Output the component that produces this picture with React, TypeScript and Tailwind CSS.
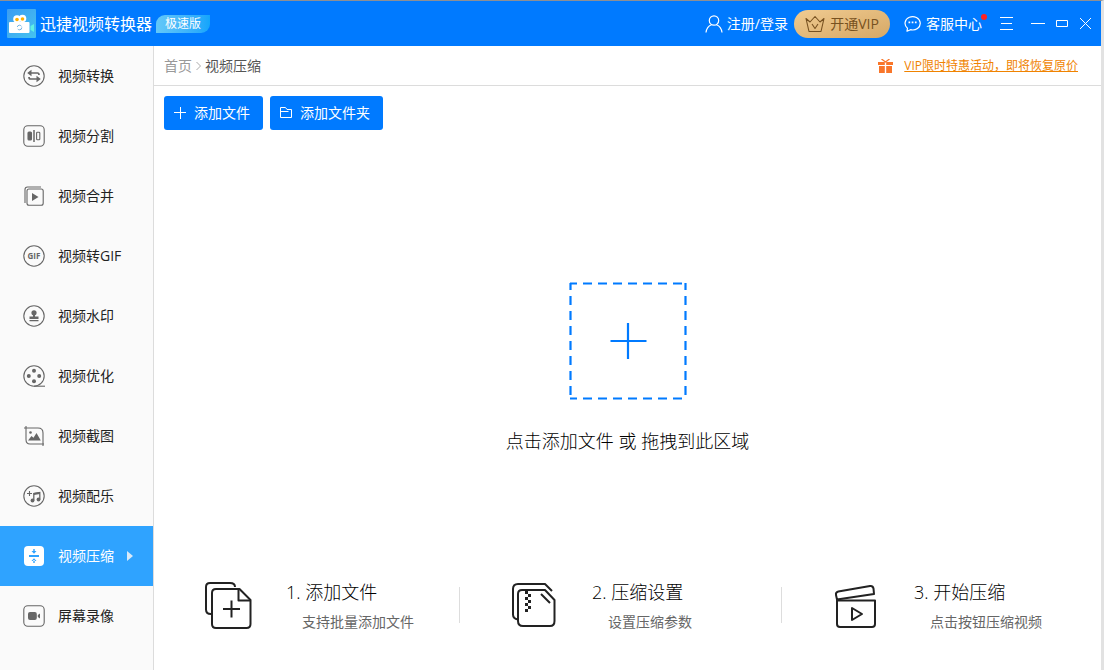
import type { ReactNode } from 'react'

function Icon({ children }: { children: ReactNode }) {
  return (
    <svg
      className="size-[22px] shrink-0"
      viewBox="0 0 22 22"
      fill="none"
      stroke="currentColor"
      strokeWidth="1.1"
      aria-hidden="true"
    >
      {children}
    </svg>
  )
}

const NAV_ITEMS: { label: string; icon: ReactNode; active?: boolean }[] = [
  {
    label: '视频转换',
    icon: (
      <Icon>
        <circle cx="11" cy="11" r="10.2" />
        <path d="M6 8h8.500c1.200 0 1.500.6 1.500 2M16 14H7.500C6.300 14 6 13.400 6 12" strokeWidth="1.7" />
        <path d="M4.200 8l4.300-3.300v6.600zM17.800 14l-4.300-3.300v6.600z" fill="currentColor" stroke="none" />
      </Icon>
    ),
  },
  {
    label: '视频分割',
    icon: (
      <Icon>
        <rect x=".8" y=".8" width="20.400" height="20.400" rx="4" />
        <rect x="5" y="7" width="3.500" height="8" rx="1" fill="currentColor" />
        <path d="M11 5v12" strokeWidth="1.500" />
        <rect x="13.600" y="7.200" width="3.200" height="7.600" rx=".8" />
      </Icon>
    ),
  },
  {
    label: '视频合并',
    icon: (
      <Icon>
        <path d="M2 18V4.500C2 2.800 2.800 2 4.500 2H18" />
        <rect x="4" y="4" width="16.200" height="16.200" rx="2" />
        <path d="M9 8v8l6.500-4z" fill="currentColor" stroke="none" />
      </Icon>
    ),
  },
  {
    label: '视频转GIF',
    icon: (
      <Icon>
        <circle cx="11" cy="11" r="10.2" />
        <text
          x="11"
          y="14"
          textAnchor="middle"
          fontSize="8"
          fontWeight="700"
          fill="currentColor"
          stroke="none"
        >
          GIF
        </text>
      </Icon>
    ),
  },
  {
    label: '视频水印',
    icon: (
      <Icon>
        <circle cx="11" cy="11" r="10.2" />
        <circle cx="11" cy="7.800" r="2.600" fill="currentColor" stroke="none" />
        <path d="M10 9h2v2.500h3.500V14h-9v-2.500H10zM6.500 15h9v1.200h-9z" fill="currentColor" stroke="none" />
      </Icon>
    ),
  },
  {
    label: '视频优化',
    icon: (
      <Icon>
        <circle cx="11" cy="11" r="10.2" />
        <path d="M11 21.200h11" />
        <g fill="currentColor" stroke="none">
          <circle cx="11" cy="5.800" r="2" />
          <circle cx="5.800" cy="11" r="2" />
          <circle cx="16.200" cy="11" r="2" />
          <circle cx="11" cy="16.200" r="2" />
        </g>
      </Icon>
    ),
  },
  {
    label: '视频截图',
    icon: (
      <Icon>
        <path d="M3 1v13.500C3 17.500 4 19 7 19h14M1 3h14c3.500 0 5 1.500 5 5v13" />
        <path d="M5 15.500l3.500-4.500 2 1.800L13.500 8l4.300 7.500z" fill="currentColor" stroke="none" />
        <circle cx="7.500" cy="7.500" r="1.300" fill="currentColor" stroke="none" />
      </Icon>
    ),
  },
  {
    label: '视频配乐',
    icon: (
      <Icon>
        <circle cx="11" cy="11" r="10.2" />
        <path d="M4 8.500h5M6.500 6v5" />
        <path d="M10.800 15.500V8.500l6-1v7" strokeWidth="1.300" />
        <path d="M10.800 9l6-1" strokeWidth="2" />
        <circle cx="9.500" cy="15.500" r="1.900" fill="currentColor" stroke="none" />
        <circle cx="15.500" cy="14.500" r="1.900" fill="currentColor" stroke="none" />
      </Icon>
    ),
  },
  {
    label: '视频压缩',
    active: true,
    icon: (
      <Icon>
        <rect x="1" y="1" width="20" height="20" rx="4" fill="#fff" stroke="none" />
        <g fill="#2fa3ff" stroke="none">
          <path d="M6 10h10v2H6z" />
          <path d="M8.500 6h5L11 8.800zM10.300 4h1.400v3h-1.400zM8.500 16h5L11 13.200zM10.300 15h1.400v3h-1.400z" />
        </g>
      </Icon>
    ),
  },
  {
    label: '屏幕录像',
    icon: (
      <Icon>
        <rect x=".8" y=".8" width="20.400" height="20.400" rx="4" />
        <rect x="5" y="7" width="8.800" height="8" rx="2" fill="currentColor" stroke="none" />
        <path d="M14.800 10l2.200-1.500v5L14.800 12z" fill="currentColor" stroke="none" />
      </Icon>
    ),
  },
]

const STEPS: { title: string; hint: string; icon: ReactNode }[] = [
  {
    title: '1. 添加文件',
    hint: '支持批量添加文件',
    icon: (
      <>
        <path d="M6 33C3 33 1 31.500 1 28.500V6C1 3 2.500 2 5 2h20c3 0 5 1.500 5 4" />
        <path d="M33 8H11c-2.700 0-4 1.300-4 4v31c0 2.700 1.300 4 4 4h30.500c2.700 0 4-1.300 4-4V19L34.500 8z" />
        <path d="M33.500 8v11.500h12M26.500 19.500v17M18 28h17" />
      </>
    ),
  },
  {
    title: '2. 压缩设置',
    hint: '设置压缩参数',
    icon: (
      <>
        <path d="M7 38.500c-3-.5-5-2-5-5V8c0-3 1.500-5 5-5h27l7 7" />
        <path d="M11 9h23l9.500 10v21c0 3-1.500 5-4.500 5H12c-3.500 0-5-2-5-5V13c0-2.700 1.300-4 4-4zM30 13l9 9" />
        <path
          d="M14 10h3v3h-3zM17 13h3v3h-3zM14 16h3v3h-3zM17 19h3v3h-3zM14 22h3v3h-3zM17 25h3v3h-3zM14 28h3v3h-3z"
          fill="currentColor"
          stroke="none"
        />
      </>
    ),
  },
  {
    title: '3. 开始压缩',
    hint: '点击按钮压缩视频',
    icon: (
      <>
        <path d="M4 18.500L3 14c-.4-2 .3-3 2.300-3.500L37 5c2-.3 3 .5 3.500 2.500l.5 5.500z" />
        <path d="M4 19.500h38V43c0 2-1 3-3 3H7c-2 0-3-1-3-3z" />
        <path d="M19 27v12l10-6z" />
      </>
    ),
  },
]

function TitleBar() {
  return (
    <header className="flex h-[45px] items-center bg-[#007aff] pr-[10px] pl-[7px] text-white">
      <svg className="size-[29px]" viewBox="0 0 29 29" aria-hidden="true">
        <defs>
          <linearGradient id="logo" x1="0" y1="0" x2="1" y2="1">
            <stop offset="0" stopColor="#3b9cf2" />
            <stop offset="1" stopColor="#45c3f0" />
          </linearGradient>
        </defs>
        <rect width="29" height="29" rx="1" fill="url(#logo)" />
        <rect x="2" y="13" width="20.500" height="11" rx="1" fill="#fff" />
        <circle cx="10" cy="10" r="3.800" fill="#fff" />
        <circle cx="15.500" cy="9.500" r="3.800" fill="#fff" />
        <circle cx="10" cy="10.500" r="1.800" fill="#ffb000" />
        <circle cx="15.500" cy="10" r="1.800" fill="#ffb000" />
        <circle cx="12.500" cy="18.500" r="2.300" fill="none" stroke="#6fb2e4" strokeDasharray="5 2" />
        <path d="M23.500 17l3.500-2v8l-3.500-2z" fill="#5ff0e4" />
      </svg>
      <h1 className="ml-1 text-[16px] leading-6">迅捷视频转换器</h1>
      <span className="ml-1 flex h-[18px] w-[54px] items-center justify-center rounded-tl-[9px] rounded-br-[9px] bg-linear-to-r from-[#63c8f8] to-[#12a5fc] text-[12px] leading-4">
        极速版
      </span>

      <div className="ml-auto flex items-center">
        <button className="flex items-center gap-[4px] text-[14px] leading-5">
          <svg className="size-[18px]" viewBox="0 0 18 18" fill="none" stroke="currentColor" strokeWidth="1.200" aria-hidden="true">
            <circle cx="9" cy="5.500" r="4.700" />
            <path d="M1 17.500c.5-4 2.500-6.500 5.500-7.700M17 17.500c-.5-4-2.500-6.500-5.500-7.700" />
          </svg>
          注册/登录
        </button>
        <button className="ml-[6px] flex h-7 w-24 items-center justify-center gap-[5px] rounded-full bg-linear-to-br from-[#f0cb91] to-[#d6a865] text-[14px] leading-5 text-[#775120]">
          <svg className="h-[18px] w-5" viewBox="0 0 20 18" fill="none" stroke="currentColor" strokeWidth="1.100" strokeLinejoin="round" aria-hidden="true">
            <path d="M1 3.500l4 3.500 5-5.500L15 7l4-3.500-3 13H4z" />
            <path d="M7 9l3 4.500L13 9" />
          </svg>
          开通VIP
        </button>
        <button className="relative ml-[14px] flex items-center gap-[5px] text-[14px] leading-5">
          <svg className="size-[17px]" viewBox="0 0 17 17" fill="none" stroke="currentColor" strokeWidth="1.200" aria-hidden="true">
            <path d="M3.500 13.200a7.600 6.700 0 1 1 3 1.500L3 16.200z" strokeLinejoin="round" />
            <path d="M4.500 7.300h1.700M7.700 7.300h1.700M10.900 7.300h1.700" strokeWidth="1.700" />
          </svg>
          客服中心
          <span className="absolute top-0 -right-[5px] size-[6px] rounded-full bg-[#ff2222]" />
        </button>
        <button className="ml-[18px]" aria-label="菜单">
          <svg className="h-[15px] w-[13px]" viewBox="0 0 13 15" stroke="currentColor" aria-hidden="true">
            <path d="M0 1.500h13M1 7.500h11M0 13.500h13" />
          </svg>
        </button>
        <button className="ml-[18px]" aria-label="最小化">
          <svg className="h-3 w-[14px]" viewBox="0 0 14 12" stroke="currentColor" aria-hidden="true">
            <path d="M0 5.500h14" />
          </svg>
        </button>
        <button className="ml-[11px]" aria-label="最大化">
          <svg className="h-3 w-[12px]" viewBox="0 0 12 12" fill="none" stroke="currentColor" aria-hidden="true">
            <path d="M.5 2.500h11v6H.5z" />
          </svg>
        </button>
        <button className="ml-[12px]" aria-label="关闭">
          <svg className="size-[11px]" viewBox="0 0 11 11" stroke="currentColor" aria-hidden="true">
            <path d="M0 0l11 11M11 0L0 11" />
          </svg>
        </button>
      </div>
    </header>
  )
}

function Sidebar() {
  return (
    <nav className="w-[154px] shrink-0 border-r border-[#dcdcdc] bg-[#fafafa]">
      {NAV_ITEMS.map(item => (
        <a
          key={item.label}
          href="#"
          className={
            item.active
              ? 'flex h-[60px] items-center bg-[#2fa3ff] pl-[23px] text-white'
              : 'flex h-[60px] items-center pl-[23px] text-[#666]'
          }
        >
          {item.icon}
          <span
            className={
              item.active
                ? 'ml-[13px] text-[14px] leading-5'
                : 'ml-[13px] text-[14px] leading-5 text-[#222]'
            }
          >
            {item.label}
          </span>
          {item.active && (
            <svg className="ml-[13px] h-[10px] w-[6px]" viewBox="0 0 6 10" fill="#d9e9f8" aria-hidden="true">
              <path d="M0 0l6 5-6 5z" />
            </svg>
          )}
        </a>
      ))}
    </nav>
  )
}

function DropZone() {
  return (
    <button className="flex flex-1 flex-col items-center justify-center pt-7">
      <svg className="size-[118px]" viewBox="0 0 118 118" fill="none" stroke="#007aff" strokeWidth="2.200" aria-hidden="true">
        <path
          d="M1 1.500h116M1 116.500h116M1.500 1v116M116.500 1v116"
          strokeDasharray="9 6"
          strokeDashoffset="2"
        />
        <path d="M59 41v36M41.500 59h36" strokeWidth="2.200" />
      </svg>
      <span className="mt-[27px] text-[18px] leading-7 font-light text-black">点击添加文件 或 拖拽到此区域</span>
    </button>
  )
}

function Steps() {
  return (
    <ol className="grid grid-cols-[306fr_322fr_319fr] pb-[38px]">
      {STEPS.map((step, i) => (
        <li key={step.title} className="flex items-center">
          <svg
            className="ml-[51px] size-12 shrink-0 text-[#222]"
            viewBox="0 0 48 48"
            fill="none"
            stroke="currentColor"
            strokeWidth="2"
            strokeLinejoin="round"
            aria-hidden="true"
          >
            {step.icon}
          </svg>
          <div className="ml-[33px]">
            <h2 className="text-[18px] leading-7 font-light text-black">{step.title}</h2>
            <p className="mt-[6px] pl-4 text-[14px] leading-5 text-[#666]">{step.hint}</p>
          </div>
          {i < STEPS.length - 1 && <div className="ml-auto h-9 w-px bg-[#ddd]" />}
        </li>
      ))}
    </ol>
  )
}

export default function App() {
  return (
    <div className="flex min-h-screen flex-col border-t border-r-[3px] border-t-[#8d8f94] border-r-[#e2e2e2] bg-white font-['Open_Sans','Noto_Sans_CJK_SC',sans-serif]">
      <TitleBar />
      <div className="flex flex-1">
        <Sidebar />
        <main className="flex min-w-0 flex-1 flex-col">
          <div className="flex h-10 items-center border-b border-[#dcdcdc] pr-[23px] pl-[10px]">
            <div className="flex items-center gap-[4px] text-[14px] leading-5">
              <a href="#" className="text-[#999]">首页</a>
              <svg className="h-[8px] w-[5px]" viewBox="0 0 5 8" fill="none" stroke="#aaa" aria-hidden="true">
                <path d="M.5 0l4 4-4 4" />
              </svg>
              <span className="text-[#555]">视频压缩</span>
            </div>
            <a href="#" className="ml-auto flex items-center gap-[11px] text-[12px] leading-5 text-[#f08300]">
              <svg className="h-[14px] w-[15px]" viewBox="0 0 15 14" fill="#f9762a" aria-hidden="true">
                <path d="M0 3h6.800v3H0zM8.200 3H15v3H8.200zM1 7h5.800v7H1zM8.200 7H14v7H8.200z" />
                <path d="M3.500 0l4 3 4-3" fill="none" stroke="#f9762a" strokeWidth="1.300" />
              </svg>
              <span className="underline">VIP限时特惠活动，即将恢复原价</span>
            </a>
          </div>

          <div className="flex gap-[7px] pt-[10px] pl-[10px] text-[14px] leading-5 text-white">
            <button className="flex h-[34px] items-center gap-[8px] rounded-[3px] bg-[#007aff] pr-[13px] pl-[10px]">
              <svg className="size-[12px]" viewBox="0 0 12 12" stroke="currentColor" aria-hidden="true">
                <path d="M0 5.500h12M6.500 0v12" />
              </svg>
              添加文件
            </button>
            <button className="flex h-[34px] items-center gap-[8px] rounded-[3px] bg-[#007aff] pr-[13px] pl-[10px]">
              <svg className="size-[12px]" viewBox="0 0 12 12" fill="none" stroke="currentColor" aria-hidden="true">
                <path d="M.5 10.500V.5h5l1.500 2h4.500v8zM.5 4.500h8" />
              </svg>
              添加文件夹
            </button>
          </div>

          <DropZone />
          <Steps />
        </main>
      </div>
    </div>
  )
}
